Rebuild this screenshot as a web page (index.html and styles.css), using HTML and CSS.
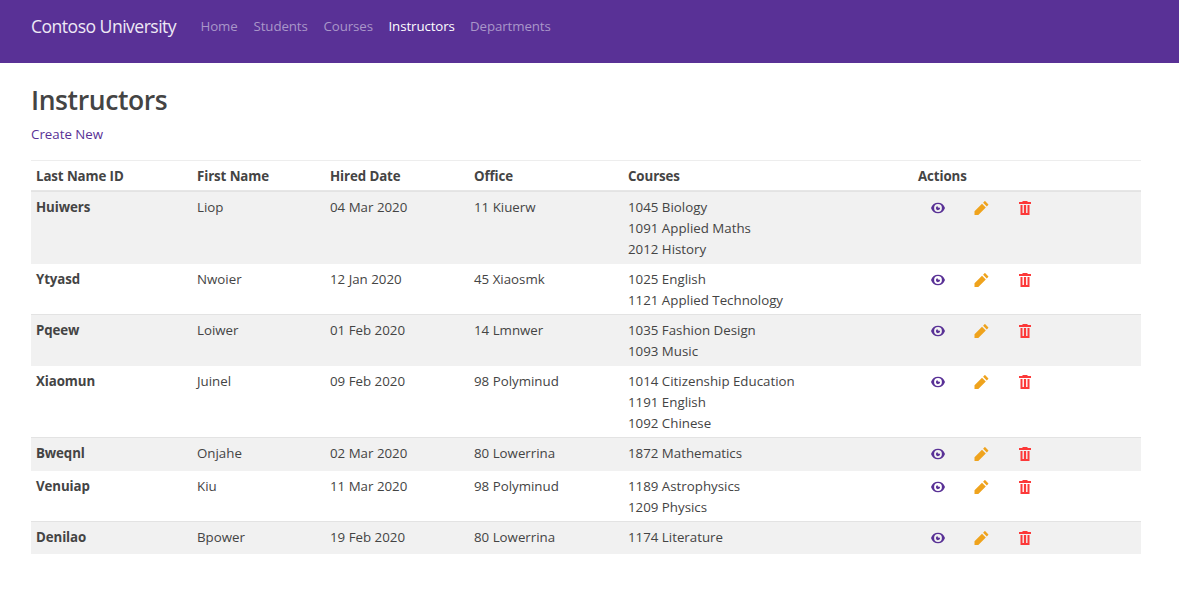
FILE: index.html
```
<!DOCTYPE html>
<html lang="en">
<head>
<meta charset="utf-8">
<title>Instructors - Contoso University</title>
<link rel="stylesheet" href="styles.css">
</head>
<body>
<svg class="sprite" aria-hidden="true">
  <symbol id="eye" viewBox="0 0 14 12"><path fill="currentColor" fill-rule="evenodd" d="M0 6C1.200 2.500 3.700.7 7 .7S12.800 2.500 14 6C12.800 9.500 10.300 11.300 7 11.300S1.200 9.500 0 6ZM7 2.100A3.900 3.900 0 1 0 7 9.900A3.900 3.900 0 1 0 7 2.100Z"/><path fill="currentColor" d="M6.500 4C6.500 5.200 6.900 5.700 8 5.700H9.100A2.100 2.100 0 1 1 6.500 4Z"/></symbol>
  <symbol id="pencil" viewBox="0 0 14 14"><path fill="currentColor" d="M0 14V10.200L7.500 2.700L11.300 6.500L3.800 14ZM8.600 1.700L10 .3Q10.400-.1 10.800 .3L13.700 3.200Q14.100 3.600 13.700 4L12.300 5.400Z"/></symbol>
  <symbol id="trash" viewBox="0 0 12 14"><path fill="currentColor" d="M0 1H3.500V0H8.500V1H12V3H0ZM1.500 4H10.500V14H1.500ZM3.500 4V12H4.900V4ZM7.100 4V12H8.500V4Z" fill-rule="evenodd"/></symbol>
</svg>
<nav class="navbar">
  <a class="brand">Contoso University</a>
  <a class="nav-link home">Home</a>
  <a class="nav-link students">Students</a>
  <a class="nav-link courses">Courses</a>
  <a class="nav-link instructors active">Instructors</a>
  <a class="nav-link departments">Departments</a>
</nav>
<main class="content">
  <h1 class="title">Instructors</h1>
  <a class="create">Create New</a>
  <table class="table">
    <colgroup><col class="c-last"><col class="c-first"><col class="c-date"><col class="c-office"><col class="c-courses"><col class="c-actions"></colgroup>
    <thead><tr><th>Last Name ID</th><th>First Name</th><th>Hired Date</th><th>Office</th><th>Courses</th><th>Actions</th></tr></thead>
    <tbody>
      <tr class="lines-3"><th>Huiwers</th><td>Liop</td><td>04 Mar 2020</td><td>11 Kiuerw</td><td>1045 Biology<br>1091 Applied Maths<br>2012 History</td><td><div class="actions"><svg class="eye"><use href="#eye"/></svg><svg class="pencil"><use href="#pencil"/></svg><svg class="trash"><use href="#trash"/></svg></div></td></tr>
      <tr class="lines-2"><th>Ytyasd</th><td>Nwoier</td><td>12 Jan 2020</td><td>45 Xiaosmk</td><td>1025 English<br>1121 Applied Technology</td><td><div class="actions"><svg class="eye"><use href="#eye"/></svg><svg class="pencil"><use href="#pencil"/></svg><svg class="trash"><use href="#trash"/></svg></div></td></tr>
      <tr class="lines-2"><th>Pqeew</th><td>Loiwer</td><td>01 Feb 2020</td><td>14 Lmnwer</td><td>1035 Fashion Design<br>1093 Music</td><td><div class="actions"><svg class="eye"><use href="#eye"/></svg><svg class="pencil"><use href="#pencil"/></svg><svg class="trash"><use href="#trash"/></svg></div></td></tr>
      <tr class="lines-3"><th>Xiaomun</th><td>Juinel</td><td>09 Feb 2020</td><td>98 Polyminud</td><td>1014 Citizenship Education<br>1191 English<br>1092 Chinese</td><td><div class="actions"><svg class="eye"><use href="#eye"/></svg><svg class="pencil"><use href="#pencil"/></svg><svg class="trash"><use href="#trash"/></svg></div></td></tr>
      <tr class="lines-1"><th>Bweqnl</th><td>Onjahe</td><td>02 Mar 2020</td><td>80 Lowerrina</td><td>1872 Mathematics</td><td><div class="actions"><svg class="eye"><use href="#eye"/></svg><svg class="pencil"><use href="#pencil"/></svg><svg class="trash"><use href="#trash"/></svg></div></td></tr>
      <tr class="lines-2"><th>Venuiap</th><td>Kiu</td><td>11 Mar 2020</td><td>98 Polyminud</td><td>1189 Astrophysics<br>1209 Physics</td><td><div class="actions"><svg class="eye"><use href="#eye"/></svg><svg class="pencil"><use href="#pencil"/></svg><svg class="trash"><use href="#trash"/></svg></div></td></tr>
      <tr class="lines-1"><th>Denilao</th><td>Bpower</td><td>19 Feb 2020</td><td>80 Lowerrina</td><td>1174 Literature</td><td><div class="actions"><svg class="eye"><use href="#eye"/></svg><svg class="pencil"><use href="#pencil"/></svg><svg class="trash"><use href="#trash"/></svg></div></td></tr>
    </tbody>
  </table>
</main>
</body>
</html>
```
FILE: styles.css
```
* { box-sizing: border-box; }
body {
  margin: 0;
  background: #fff;
  color: #444;
  font: 13.3px/21px "Open Sans", "Noto Sans", sans-serif;
  overflow: hidden;
}
.sprite { display: none; }
.navbar {
  display: flex;
  height: 63px;
  padding: 13px 31px 0;
  background: #593196;
  white-space: nowrap;
}
.brand {
  width: 169.500px;
  color: #eee9f5;
  font-size: 17.600px;
  line-height: 27px;
  letter-spacing: -.53px;
}
.nav-link { color: #a996c9; line-height: 27px; letter-spacing: -.1px; }
.nav-link.active { color: #fff; }
.home { width: 53px; }
.students { width: 70px; }
.courses { width: 65px; }
.instructors { width: 81.500px; }
.content { padding: 20px 38px 0 31px; }
.title {
  margin: 0;
  font-size: 26.500px;
  font-weight: 600;
  line-height: 35px;
  letter-spacing: -.4px;
}
.create { display: block; margin-top: 6px; color: #593196; }
.table {
  width: 1110px;
  margin-top: 15px;
  table-layout: fixed;
  border-collapse: separate;
  border-spacing: 0;
}
.c-last { width: 161px; }
.c-first { width: 133px; }
.c-date { width: 144px; }
.c-office { width: 154px; }
.c-courses { width: 290px; }
.c-actions { width: 228px; }
th, td {
  padding: 5px 0 0 5px;
  border-top: 1px solid #ededed;
  text-align: left;
  vertical-align: top;
  white-space: nowrap;
}
th { font-weight: 700; letter-spacing: -.1px; }
thead tr { height: 31px; }
thead th { border-bottom: 1px solid #e6e6e6; }
.lines-1 { height: 33px; }
.lines-2 { height: 51px; }
.lines-3 { height: 72px; }
tbody tr:nth-child(odd) { background: #f1f1f1; }
tbody tr:nth-child(odd) > * { border-top-color: #e3e3e3; }
tbody tr:nth-child(even) > * { border-top-color: #f1f1f1; }
.actions { display: flex; align-items: center; height: 21px; padding-left: 13px; }
.eye { width: 14px; height: 12px; margin-right: 29px; color: #593196; }
.pencil { width: 15px; height: 14px; margin-right: 29.500px; color: #efa31d; }
.trash { width: 12px; height: 14px; color: #fc3939; }
```
